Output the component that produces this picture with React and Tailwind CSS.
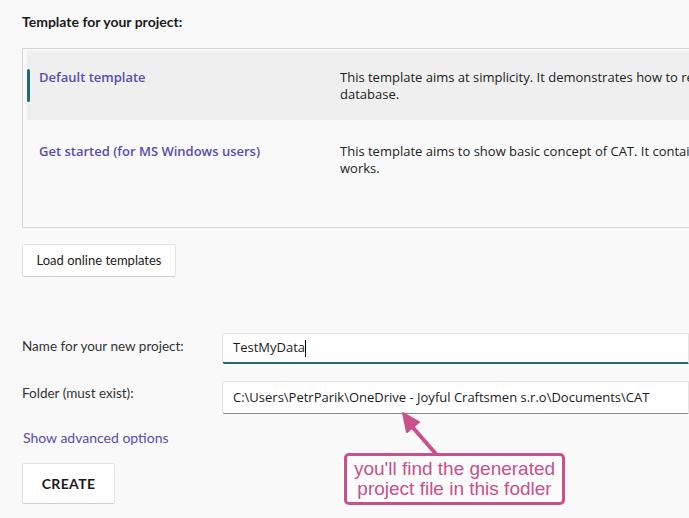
import React from 'react';

const templates = [
  {
    name: 'Default template',
    lines: ['This template aims at simplicity. It demonstrates how to read data from a', 'database.'],
    selected: true,
  },
  {
    name: 'Get started (for MS Windows users)',
    lines: ['This template aims to show basic concept of CAT. It contains an example of how', 'works.'],
    selected: false,
  },
];

export default function App() {
  return (
    <div className="relative w-[689px] h-[518px] overflow-hidden bg-[#f9f9f9] text-[#1b1b1b]">
      <div className="pl-[22px] pt-[13px]">
        {/* Template picker */}
        <h2 className="font-[Lato,sans-serif] text-[14px] font-bold leading-[18px]">Template for your project:</h2>

        <div className="mt-[17px] w-[760px] h-[180px] border border-[#d6d6d6] pl-[4px] pt-[2px] flex flex-col gap-[5px]">
          {templates.map((t) => (
            <div
              key={t.name}
              className={`relative flex h-[69px] pt-[18px] ${t.selected ? 'bg-[#efefef]' : ''}`}
            >
              {t.selected && <span className="absolute left-0 top-[18px] w-[3px] h-[33px] rounded-full bg-[#1e6c71]"></span>}
              <div className="w-[313px] pl-[12px] font-['Open_Sans',sans-serif] text-[13px] font-semibold leading-[17px] text-[#5a4cb0]">{t.name}</div>
              <div className="flex-1 overflow-hidden whitespace-nowrap font-['Open_Sans',sans-serif] text-[13px] leading-[17px] text-[#222]">
                {t.lines[0]}
                <br />
                {t.lines[1]}
              </div>
            </div>
          ))}
        </div>

        <button className="mt-[16px] w-[154px] h-[33px] bg-white border border-[#e3e3e3] border-b-[#cfcfcf] rounded-[2px] font-[Lato,sans-serif] text-[13px] text-[#222]">
          Load online templates
        </button>

        {/* Project form */}
        <div className="mt-[56px] flex flex-col gap-[17px]">
          <div className="flex">
            <label className="w-[200px] pt-[3px] font-[Lato,sans-serif] text-[13.5px] text-[#333]">Name for your new project:</label>
            <div className="flex-1 h-[31px] bg-white border border-[#e5e5e5] border-b-2 border-b-[#1e6c71] rounded-l-[3px] flex items-center pl-[10px] font-['Open_Sans',sans-serif] text-[13px] text-[#1b1b1b]">
              TestMyData<span className="inline-block w-px h-[17px] bg-black"></span>
            </div>
          </div>
          <div className="flex">
            <label className="w-[200px] pt-[2px] font-[Lato,sans-serif] text-[13.5px] text-[#333]">Folder (must exist):</label>
            <div className="flex-1 h-[33px] bg-white border border-[#e5e5e5] border-b-[#8a8a8a] rounded-l-[3px] flex items-center pl-[10px] font-['Open_Sans',sans-serif] text-[13px] text-[#1b1b1b]">
              C:\Users\PetrParik\OneDrive - Joyful Craftsmen s.r.o\Documents\CAT
            </div>
          </div>
        </div>

        <div className="mt-[15px] ml-px font-[Lato,sans-serif] text-[14px] leading-[18px] text-[#5a4cb0]">Show advanced options</div>

        <button className="mt-[16px] w-[93px] h-[41px] bg-white border border-[#e3e3e3] border-b-[#cfcfcf] rounded-[2px] font-[Lato,sans-serif] text-[14px] font-bold tracking-wide text-[#1b1b1b]">
          CREATE
        </button>
      </div>

      {/* Annotation callout */}
      <svg className="absolute left-[390px] top-[405px]" width="60" height="52" viewBox="0 0 60 52">
        <line x1="46" y1="49" x2="18" y2="17" stroke="#c8508b" strokeWidth="4" strokeLinecap="round" />
        <polygon points="13,8 29,17 17,27" fill="#c8508b" stroke="#c8508b" strokeWidth="2" strokeLinejoin="round" />
      </svg>
      <div className="absolute left-[344px] top-[453px] w-[221px] h-[52px] border-[3px] border-[#c8508b] rounded-[5px] bg-[#fbfbfb] font-['Liberation_Sans',Arial,sans-serif] text-[#c8508b] text-[19px] leading-[20px] text-center pt-[3px]">
        you'll find the generated project file in this fodler
      </div>
    </div>
  );
}
